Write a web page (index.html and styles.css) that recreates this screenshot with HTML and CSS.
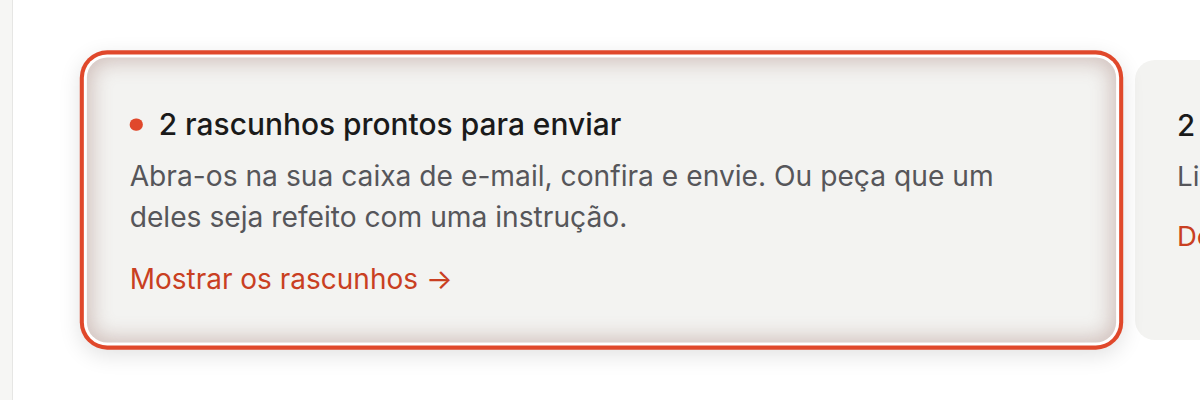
FILE: index.html
```html
<!DOCTYPE html>
<html lang="pt-BR">
<head>
    <meta charset="UTF-8">
    <meta name="viewport" content="width=device-width, initial-scale=1.0">
    <title>Resumo</title>
    <link rel="stylesheet" href="styles.css">
</head>
<body>

    <div class="layout">
        <aside class="sidebar"></aside>

        <main class="main">
            <div class="cards">
                <div class="card card-active" tabindex="0">
                    <h3 class="card-title"><span class="dot"></span>2 rascunhos prontos para enviar</h3>
                    <p class="card-text">Abra-os na sua caixa de e-mail, confira e envie. Ou peça que um deles seja refeito com uma instrução.</p>
                    <a class="card-link" href="#">Mostrar os rascunhos →</a>
                </div>

                <div class="card">
                    <h3 class="card-title">2 lembretes para hoje</h3>
                    <p class="card-text">Lista de tarefas com prazo para hoje à tarde.</p>
                    <a class="card-link" href="#">Definir horários →</a>
                </div>
            </div>
        </main>
    </div>

</body>
</html>
```

FILE: styles.css
```css
:root {
    --bg-color: #ffffff;
    --card-color: #f3f3f1;
    --accent: #e0482b;
    --link-color: #c93f22;
    --title-color: #1a1a1a;
    --text-color: #56565a;
}
* {
    box-sizing: border-box;
}
body {
    font-family: Inter, "Noto Sans", Arial, sans-serif;
    background-color: var(--bg-color);
    margin: 0;
    overflow: hidden;
}
.layout {
    display: flex;
    height: 100vh;
}
.sidebar {
    flex: 0 0 13px;
    background: #f6f6f4;
    border-right: 1px solid #e6e6e4;
}
.main {
    flex: 1;
    min-width: 0;
    padding: 60px 0 0 83px;
}
.cards {
    display: flex;
    gap: 28px;
}
.card {
    flex: 0 0 1011px;
    height: 280px;
    background: var(--card-color);
    border-radius: 20px;
    padding: 48px 42px 0;
}
.card-active {
    transform: scale(1.018);
    outline: none;
    box-shadow:
        inset 0 0 20px 5px rgba(140, 90, 80, 0.32),
        0 0 0 3px #ffffff,
        0 0 0 7px var(--accent),
        0 6px 22px 6px rgba(0, 0, 0, 0.12);
}
.card-title {
    display: flex;
    align-items: center;
    gap: 16px;
    margin: 0 0 12px;
    font-size: 29.4px;
    line-height: 36px;
    font-weight: 500;
    color: var(--title-color);
    white-space: nowrap;
}
.dot {
    flex: 0 0 12.5px;
    height: 12.5px;
    border-radius: 50%;
    background: var(--accent);
}
.card-text {
    margin: 0 0 21px;
    max-width: 880px;
    font-size: 27.7px;
    line-height: 41px;
    color: var(--text-color);
}
.card-link {
    display: block;
    font-size: 27.5px;
    line-height: 36px;
    color: var(--link-color);
    text-decoration: none;
}
```
